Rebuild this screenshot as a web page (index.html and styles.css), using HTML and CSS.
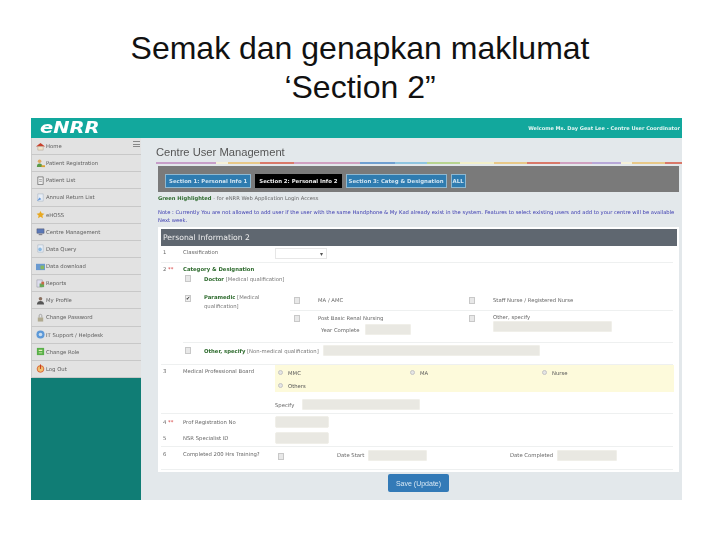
FILE: index.html
```html
<!DOCTYPE html>
<html lang="ms">
<head>
  <meta charset="UTF-8">
  <title>Semak dan genapkan maklumat</title>
  <link rel="stylesheet" href="styles.css">
</head>
<body>
  <h1 class="slide-title">Semak dan genapkan maklumat<br>‘Section 2”</h1>

  <div class="app">
    <header class="topbar">
      <span class="logo">eNRR</span>
      <span class="welcome">Welcome Ms. Day Geat Lee - Centre User Coordinator</span>
    </header>

    <div class="app-body">
      <nav class="sidebar">
        <span class="burger"></span>
        <ul class="menu">
          <li><svg viewBox="0 0 10 10"><path d="M0 5 5 1l5 4z" fill="#c8402c"/><path d="M2 5h6v4H2z" fill="#f0e2c8" stroke="#a98" stroke-width=".5"/></svg>Home</li>
          <li><svg viewBox="0 0 10 10"><circle cx="4" cy="2.5" r="2" fill="#e0a860"/><path d="M1 9c0-3 1-4 3-4s3 1 3 4z" fill="#5a9a48"/><path d="M6 7h4v2H6z" fill="#d8a030"/></svg>Patient Registration</li>
          <li><svg viewBox="0 0 10 10"><path d="M2 1h6v8.500H2z" fill="#eee" stroke="#666" stroke-width=".8"/><path d="M3.500 4h3M3.500 6h3" stroke="#666" stroke-width=".6"/></svg>Patient List</li>
          <li><svg viewBox="0 0 10 10"><path d="M2 1h6v8H2z" fill="#e8eef6" stroke="#9ab" stroke-width=".5"/><path d="M1 9l3-4 2 2z" fill="#6a9ad8"/></svg>Annual Return List</li>
          <li><svg viewBox="0 0 10 10"><path d="M5 1l1.300 2.700 3 .4-2.200 2 .6 3L5 7.600 2.300 9.100l.6-3-2.200-2 3-.4z" fill="#e8a820"/></svg>eHOSS</li>
          <li><svg viewBox="0 0 10 10"><path d="M1 2h8v5H1z" fill="#5a78b8" stroke="#556" stroke-width=".5"/><path d="M3 8.500h4" stroke="#667" stroke-width="1"/></svg>Centre Management</li>
          <li><svg viewBox="0 0 10 10"><path d="M2 1h6v8H2z" fill="#e8eef6" stroke="#9ab" stroke-width=".5"/><circle cx="4.500" cy="6" r="2" fill="#8ab8e0"/></svg>Data Query</li>
          <li><svg viewBox="0 0 10 10"><path d="M0 2h10v7H0z" fill="#6a9ad0"/><path d="M5 4h4v4H5z" fill="#88b860"/></svg>Data download</li>
          <li><svg viewBox="0 0 10 10"><path d="M1 1h6v8H1z" fill="#dde" stroke="#889" stroke-width=".5"/><path d="M4 5h5v4H4z" fill="#68a858"/><path d="M6 3h3v3H6z" fill="#c86848"/></svg>Reports</li>
          <li><svg viewBox="0 0 10 10"><circle cx="5" cy="3" r="2" fill="#8a7060"/><path d="M1 9.500c0-3 2-4 4-4s4 1 4 4z" fill="#555"/></svg>My Profile</li>
          <li><svg viewBox="0 0 10 10"><path d="M2 5h6v4.500H2z" fill="#b0aa90"/><path d="M3.500 5V3a1.500 1.500 0 0 1 3 0v2" fill="none" stroke="#999" stroke-width=".9"/></svg>Change Password</li>
          <li><svg viewBox="0 0 10 10"><circle cx="5" cy="5" r="4.500" fill="#5c98d8"/><circle cx="5" cy="5" r="2" fill="#c8ddf0"/></svg>IT Support / Helpdesk</li>
          <li><svg viewBox="0 0 10 10"><path d="M1 1h8v8H1z" fill="#58b048"/><path d="M3 3h4v1.500H3zM3 6h4v1H3z" fill="#e8f0c0"/></svg>Change Role</li>
          <li><svg viewBox="0 0 10 10"><circle cx="5" cy="5.500" r="3.700" fill="#f0c070" stroke="#d86030" stroke-width="1"/><path d="M5 .5v5" stroke="#c84020" stroke-width="1.200"/></svg>Log Out</li>
        </ul>
      </nav>

      <main class="content">
        <h2 class="page-title">Centre User Management</h2>
        <div class="rainbow"></div>

        <div class="tabs">
          <a class="tab">Section 1: Personal Info 1</a>
          <a class="tab active">Section 2: Personal Info 2</a>
          <a class="tab">Section 3: Categ &amp; Designation</a>
          <a class="tab">ALL</a>
        </div>

        <p class="hint"><b>Green Highlighted</b> - for eNRR Web Application Login Access</p>
        <p class="note">Note : Currently You are not allowed to add user if the user with the same Handphone &amp; My Kad already exist in the system. Features to select existing users and add to your centre will be available<br>Next week.</p>

        <section class="panel">
          <h3 class="panel-head">Personal Information 2</h3>

          <div class="row row-1">
            <span class="num">1</span>
            <span class="label">Classification</span>
            <div class="field"><span class="select">▾</span></div>
          </div>

          <div class="row row-2">
            <span class="num">2 <i>**</i></span>
            <div class="category">
              <div class="label strong">Category &amp; Designation</div>

              <div class="qual qual-doctor">
                <span class="check"></span>
                <span class="qual-text"><b>Doctor</b> [Medical qualification]</span>
              </div>

              <div class="qual qual-para">
                <span class="check checked">✔</span>
                <span class="qual-text para-text"><b>Paramedic</b> [Medical<br>qualification]</span>
                <div class="para-grid">
                  <div class="opt opt-top"><span class="check"></span><span>MA / AMC</span></div>
                  <div class="opt opt-top"><span class="check"></span><span>Staff Nurse / Registered Nurse</span></div>
                  <div class="opt"><span class="check"></span><div><span>Post Basic Renal Nursing</span><div class="year"><span>Year Complete</span><span class="input w46"></span></div></div></div>
                  <div class="opt"><span class="check"></span><div><span class="other-label">Other, specify</span><span class="input w119"></span></div></div>
                </div>
              </div>

              <div class="qual qual-other">
                <span class="check"></span>
                <span class="qual-text"><b>Other, specify</b> [Non-medical qualification]</span>
                <span class="input w217"></span>
              </div>
            </div>
          </div>

          <div class="row row-3">
            <span class="num">3</span>
            <span class="label">Medical Professional Board</span>
            <div class="field">
              <div class="board">
                <div class="board-line">
                  <span class="radio-item"><span class="radio"></span>MMC</span>
                  <span class="radio-item"><span class="radio"></span>MA</span>
                  <span class="radio-item"><span class="radio"></span>Nurse</span>
                </div>
                <div class="board-line"><span class="radio-item"><span class="radio"></span>Others</span></div>
              </div>
              <div class="specify"><span>Specify</span><span class="input w118"></span></div>
            </div>
          </div>

          <div class="row-pair">
            <div class="row row-4">
              <span class="num">4 <i>**</i></span>
              <span class="label">Prof Registration No</span>
              <div class="field"><span class="input w54"></span></div>
            </div>
            <div class="row row-5">
              <span class="num">5</span>
              <span class="label">NSR Specialist ID</span>
              <div class="field"><span class="input w54"></span></div>
            </div>
          </div>

          <div class="row row-6">
            <span class="num">6</span>
            <span class="label">Completed 200 Hrs Training?</span>
            <div class="field training">
              <span class="check"></span>
              <span class="date-start">Date Start</span>
              <span class="input w59"></span>
              <span class="date-end">Date Completed</span>
              <span class="input w60"></span>
            </div>
          </div>
        </section>

        <div class="actions"><button class="save">Save (Update)</button></div>
      </main>
    </div>
  </div>
</body>
</html>
```

FILE: styles.css
```css
html, body {
  margin: 0;
  padding: 0;
  height: 540px;
  overflow: hidden;
  background-color: white;
}
body {
  font-family: "Liberation Sans", Arial, sans-serif;
}
.slide-title {
  margin: 0;
  padding-top: 29px;
  font-size: 32px;
  line-height: 39px;
  font-weight: normal;
  text-align: center;
  color: #111;
}

/* embedded screenshot of the application */
.app {
  width: 651px;
  height: 382px;
  margin: 11px 0 0 31px;
  display: flex;
  flex-direction: column;
  background-color: #e3e8eb;
  font-family: "DejaVu Sans", Verdana, sans-serif;
  font-size: 5.3px;
  color: #666;
  filter: blur(0.5px);
}
.topbar {
  height: 20px;
  flex: none;
  display: flex;
  justify-content: space-between;
  align-items: center;
  padding: 0 2px 0 9px;
  background-color: #12a89d;
}
.logo {
  font-family: "DejaVu Sans", sans-serif;
  font-style: italic;
  font-weight: bold;
  font-size: 15px;
  transform: scaleX(1.3);
  transform-origin: left center;
  color: white;
}
.welcome {
  font-size: 5.05px;
  font-weight: bold;
  color: #e4f5f3;
}
.app-body {
  flex: 1;
  display: flex;
  min-height: 0;
}

.sidebar {
  width: 110px;
  flex: none;
  position: relative;
  background-color: #107d75;
}
.burger {
  position: absolute;
  top: 3px;
  right: 1px;
  width: 7px;
  height: 4px;
  border-top: 1px solid #888;
  border-bottom: 1px solid #888;
  background: linear-gradient(#888, #888) center / 100% 1px no-repeat;
}
.menu {
  list-style: none;
  margin: 0;
  padding: 0;
}
.menu li {
  height: 16.15px;
  display: flex;
  align-items: center;
  gap: 1px;
  padding-left: 4px;
  border-left: 1px solid #ccc;
  border-bottom: 1px solid #c8c8c8;
  background-color: #e2e2e2;
  color: #5c5c5c;
}
.menu svg {
  width: 9px;
  height: 9px;
  flex: none;
}

.content {
  flex: 1;
  min-width: 0;
  padding: 0 3px 0 15px;
}
.page-title {
  margin: 0;
  padding-top: 8px;
  height: 16px;
  font-family: "Liberation Sans", Arial, sans-serif;
  font-size: 11.2px;
  line-height: 13px;
  font-weight: normal;
  color: #555;
}
.rainbow {
  height: 2px;
  margin-right: -3px;
  background: linear-gradient(to right,
    #c79fc9 0 60px, #f5f0d8 60px 72px, #e8c888 72px 104px, #d9796a 104px 138px,
    #d0a0c0 138px 204px, #6f9fd0 204px 239px, #8fc5e0 239px 271px, #b8d490 271px 304px,
    #f2efc8 304px 338px, #e8c888 338px 371px, #d9796a 371px 404px, #d0a0c0 404px 436px,
    #b8a8d8 436px 465px, #f5f0d8 465px 476px, #e8c888 476px 509px, #d9796a 509px);
}

.tabs {
  height: 26px;
  box-sizing: border-box;
  margin: 2px 0 0 2px;
  padding: 8px 0 0 7px;
  display: flex;
  gap: 4px;
  align-items: flex-start;
  background-color: #7a7a7a;
}
.tab {
  height: 14px;
  box-sizing: border-box;
  padding: 0 3px;
  display: flex;
  align-items: center;
  font-size: 5.4px;
  font-weight: bold;
  white-space: nowrap;
  color: #cfe4f2;
  background-color: #2f7cb0;
  border: 1px solid #8fb8d0;
}
.tab:nth-child(3) {
  padding: 0 2px;
}
.tab:last-child {
  padding: 0 1px;
}
.tab.active {
  color: #eee;
  background-color: #000;
  border-color: #000;
}

.hint, .note {
  margin: 0;
  font-size: 5.2px;
  line-height: 8px;
}
.hint {
  margin: 2px 0 0 2px;
}
.hint b {
  color: #2e6b2e;
}
.note {
  margin: 6px 0 0 2px;
  font-size: 5.23px;
  color: #3a3ab0;
  white-space: nowrap;
}

.panel {
  height: 245px;
  box-sizing: border-box;
  margin: 3px 0 0 2px;
  padding: 2px 2px 0 3px;
  background-color: white;
}
.panel-head {
  margin: 0;
  height: 17px;
  padding-left: 2px;
  display: flex;
  align-items: center;
  font-size: 7.7px;
  font-weight: normal;
  color: #eee;
  background-color: #5f6770;
}
.row {
  display: grid;
  grid-template-columns: 22px 92px 1fr;
  border-bottom: 1px solid #eef0f0;
  margin-right: 4px;
}
.num {
  padding-left: 2px;
}
.num i {
  font-style: normal;
  color: #d43a3a;
}
.label.strong {
  font-weight: bold;
  color: #2e6b2e;
}
.field {
  min-width: 0;
}

.row-1 {
  height: 17px;
  box-sizing: border-box;
  padding-top: 2px;
}
.row-1 .label, .row-1 .num {
  line-height: 8px;
}
.select {
  display: block;
  width: 52px;
  height: 11px;
  box-sizing: border-box;
  padding-right: 3px;
  text-align: right;
  line-height: 10px;
  font-size: 6px;
  color: #555;
  border: 1px solid #e6e6e6;
}

.row-2 {
  grid-template-columns: 22px 1fr;
  height: 102px;
  box-sizing: border-box;
  padding-top: 2px;
}
.row-2 .num {
  line-height: 8px;
}
.category .label {
  line-height: 8px;
}
.qual {
  display: flex;
  gap: 13px;
  padding-left: 2px;
}
.check {
  width: 6px;
  height: 7px;
  flex: none;
  display: block;
  box-sizing: border-box;
  border: 1px solid #c8c8c8;
  background-color: #e8e8e8;
  font-size: 5px;
  line-height: 5px;
  text-align: center;
  color: #333;
}
.check.checked {
  margin-top: 2px;
  background-color: #f0f0f0;
}
.qual-text {
  line-height: 8px;
  color: #777;
}
.qual-text b {
  color: #2e6b2e;
}
.qual-doctor {
  padding-top: 2px;
  height: 17px;
  box-sizing: border-box;
}
.qual-para {
  height: 53px;
  box-sizing: border-box;
  padding-top: 3px;
  border-bottom: 1px solid #eef0f0;
}
.para-text {
  width: 60px;
  flex: none;
  line-height: 9px;
}
.para-grid {
  flex: 1;
  margin: 3px 0 0 13px;
  display: grid;
  grid-template-columns: 175px 1fr;
  grid-template-rows: 15px 1fr;
}
.opt {
  display: flex;
  gap: 18px;
  align-items: flex-start;
  padding: 3px 0 0 4px;
  line-height: 8px;
}
.opt .check {
  margin-top: 1px;
}
.opt-top {
  padding-top: 0;
  border-bottom: 1px solid #eef0f0;
}
.year {
  display: flex;
  align-items: center;
  gap: 6px;
  margin-top: 2px;
  padding-left: 3px;
}
.other-label {
  display: block;
  line-height: 7px;
}
.qual-other {
  padding-top: 2px;
}
.qual-other .check {
  margin-top: 2px;
}
.qual-other .qual-text {
  margin-top: 2px;
  width: 106px;
  flex: none;
  white-space: nowrap;
}

.input {
  display: block;
  flex: none;
  height: 11px;
  box-sizing: border-box;
  border: 1px solid #f0efe9;
  border-radius: 1px;
  background-color: #e9e8e2;
}
.w46 { width: 46px; }
.w54 { width: 54px; height: 12px; border-radius: 2px; }
.w59 { width: 59px; }
.w60 { width: 60px; }
.w118 { width: 118px; }
.w119 { width: 119px; }
.w217 { width: 217px; }

.row-3 {
  height: 49px;
  box-sizing: border-box;
}
.row-3 .num, .row-3 .label {
  padding-top: 2px;
  line-height: 8px;
}
.board {
  height: 27px;
  box-sizing: border-box;
  padding: 1px 0 0 3px;
  margin-right: -1px;
  background-color: #fdfadb;
}
.board-line {
  height: 13px;
  display: flex;
  align-items: center;
}
.radio-item {
  width: 132.500px;
  display: flex;
  align-items: center;
  gap: 5px;
  color: #555;
}
.radio {
  width: 5px;
  height: 5px;
  box-sizing: border-box;
  border-radius: 50%;
  border: 1px solid #c4c4c4;
  background-color: #e4e4e4;
}
.specify {
  display: flex;
  align-items: center;
  gap: 8px;
  margin-top: 7px;
}

.row-pair {
  height: 32px;
  margin-right: 4px;
  border-bottom: 1px solid #eef0f0;
}
.row-pair .row {
  height: 16px;
  margin-right: 0;
  border-bottom: none;
  align-items: center;
}

.row-6 {
  height: 23px;
  box-sizing: border-box;
  padding-top: 3px;
}
.row-6 .num, .row-6 .label {
  line-height: 8px;
}
.training {
  display: flex;
  align-items: flex-start;
  padding-left: 3px;
}
.training .check {
  margin-top: 3px;
}
.date-start {
  margin: 2px 0 0 53px;
  width: 31px;
}
.date-end {
  margin: 2px 0 0 83px;
  width: 47px;
}

.actions {
  padding-top: 2px;
  padding-left: 232px;
}
.save {
  width: 61px;
  height: 18px;
  padding: 0;
  border: none;
  border-radius: 2px;
  font-family: "Liberation Sans", Arial, sans-serif;
  font-size: 7px;
  color: #d8e8f4;
  background-color: #337ab7;
}
```
